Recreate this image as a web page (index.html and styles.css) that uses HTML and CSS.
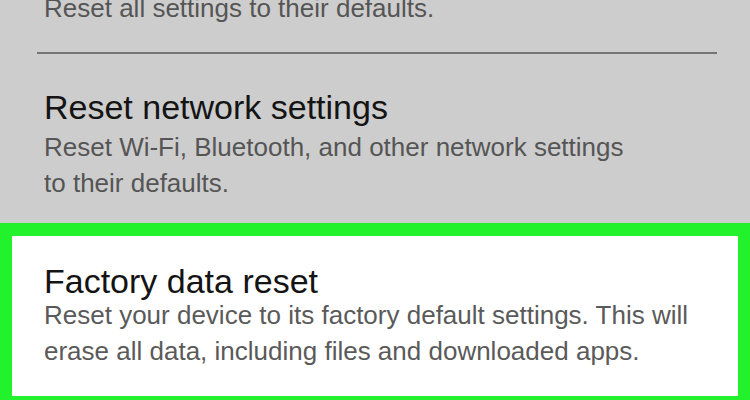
FILE: index.html
```html
<!DOCTYPE html>
<html lang="en">
<head>
<meta charset="utf-8">
<title>Reset</title>
<link rel="stylesheet" href="styles.css">
</head>
<body>
<div class="screen">
  <div class="item item-first">
    <p class="desc">Reset all settings to their defaults.</p>
  </div>
  <hr class="divider">
  <div class="item item-network">
    <h2 class="title">Reset network settings</h2>
    <p class="desc desc-network">Reset Wi-Fi, Bluetooth, and other network settings to their defaults.</p>
  </div>
  <div class="highlight">
    <div class="item item-factory">
      <h2 class="title">Factory data reset</h2>
      <p class="desc desc-factory">Reset your device to its factory default settings. This will erase all data, including files and downloaded apps.</p>
    </div>
  </div>
</div>
</body>
</html>
```
FILE: styles.css
```css
* { box-sizing: border-box; }
html, body {
  margin: 0;
  padding: 0;
  background: #cdcdcd;
}
.screen {
  width: 750px;
  height: 400px;
  overflow: hidden;
  background: #cdcdcd;
  font-family: "Liberation Sans", Arial, sans-serif;
  display: flex;
  flex-direction: column;
}
.item {
  padding-left: 44px;
}
.title {
  margin: 0;
  font-size: 34px;
  line-height: 32px;
  font-weight: normal;
  color: #141414;
}
.desc {
  margin: 0;
  font-size: 26px;
  line-height: 36px;
  color: #555555;
}
.item-first {
  margin-top: -10px;
}
.divider {
  margin: 26px 0 0 37px;
  width: 680px;
  height: 2px;
  border: none;
  background: #747474;
  flex: none;
}
.item-network {
  padding-top: 37px;
  padding-bottom: 22px;
}
.item-network .title {
  margin-bottom: 6px;
}
.desc-network { max-width: 595px; }
.highlight {
  flex: none;
  border: 12px solid #22f22c;
  border-top-width: 13px;
  background: #ffffff;
}
.item-factory {
  padding-left: 32px;
  padding-top: 29px;
  padding-bottom: 27px;
}
.desc-factory {
  max-width: 680px;
  color: #5a5a5a;
}
```
